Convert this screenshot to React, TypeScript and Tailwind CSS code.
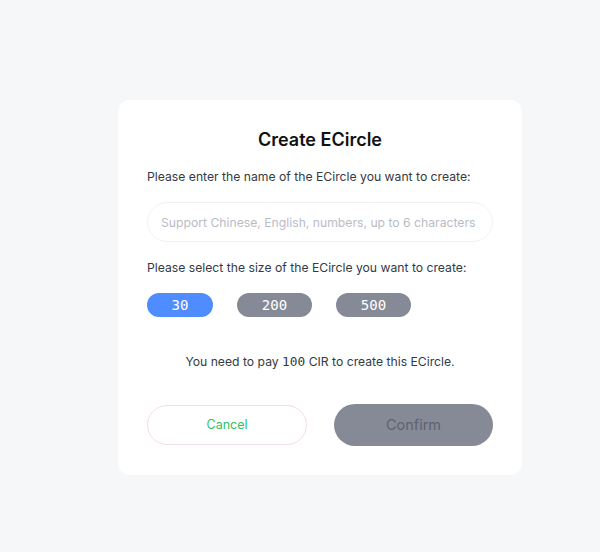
import React, { useState } from 'react';

const sizes = [30, 200, 500];

const App: React.FC = () => {
  const [name, setName] = useState('');
  const [size, setSize] = useState(30);

  return (
    <div className="min-h-screen bg-[#f6f7f9] pt-[100px] font-['Inter',sans-serif]">
      <div className="ml-[118px] w-[404px] rounded-xl bg-white px-[29px] pt-[29px] pb-[29px]">
        <h2 className="text-center text-[18px] font-semibold leading-[22px] text-[#111]">Create ECircle</h2>

        <p className="mt-[17px] text-[12.2px] leading-[18px] text-[#333a45]">
          Please enter the name of the ECircle you want to create:
        </p>
        <input
          type="text"
          value={name}
          onChange={(e) => setName(e.target.value)}
          placeholder="Support Chinese, English, numbers, up to 6 characters"
          className="mt-[16px] h-10 w-full rounded-full border border-[#f1f2f4] px-[13px] text-[12.2px] text-[#333] outline-none placeholder:text-[#b9bcc4]"
        />

        <p className="mt-[17px] text-[12.2px] leading-[18px] text-[#333a45]">
          Please select the size of the ECircle you want to create:
        </p>
        <div className="mt-[16px] flex gap-6">
          {sizes.map((s) => (
            <button
              key={s}
              onClick={() => setSize(s)}
              className={`h-6 rounded-full font-['DejaVu_Sans_Mono',monospace] text-[14px] text-white ${
                s === 30 ? 'w-[66px]' : 'w-[75px]'
              } ${size === s ? 'bg-[#4f8cff]' : 'bg-[#868a97]'}`}
            >
              {s}
            </button>
          ))}
        </div>

        <p className="mt-[36px] text-center text-[12.2px] leading-[18px] text-[#333a45]">
          You need to pay <span className="font-['DejaVu_Sans_Mono',monospace] text-[12.8px]">100</span> CIR to create this ECircle.
        </p>

        <div className="mt-[33px] flex items-center justify-between">
          <button className="h-10 w-[160px] rounded-full border border-[#f3dfe3] text-[12.5px] text-[#2fbf5f]">
            Cancel
          </button>
          <button className="h-[42px] w-[159px] rounded-full bg-[#868a97] text-[14.5px] text-[#5e626e]">
            Confirm
          </button>
        </div>
      </div>
    </div>
  );
};

export default App;
